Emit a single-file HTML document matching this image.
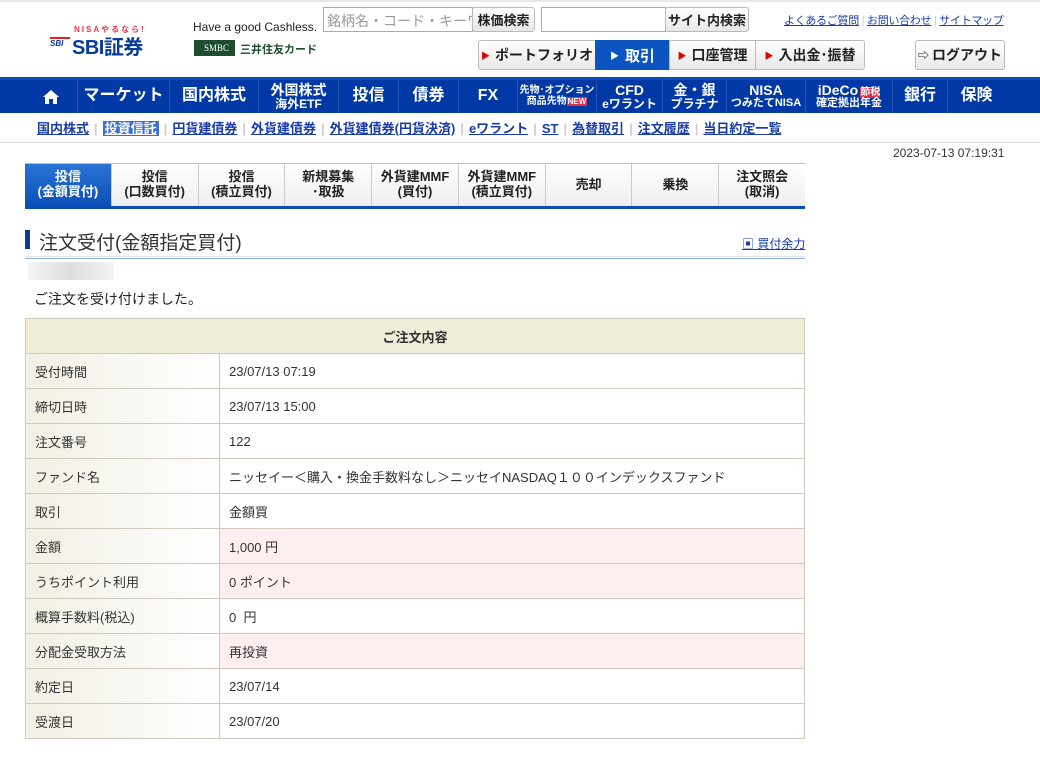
<!DOCTYPE html>
<html><head><meta charset="utf-8">
<style>
*{margin:0;padding:0;box-sizing:border-box}
body{width:1040px;height:761px;background:#fff;font-family:"Liberation Sans","Noto Sans CJK JP",sans-serif;color:#333;position:relative;overflow:hidden;font-size:13px}
.a{position:absolute}
a{color:#0b3a9e}
.topline{left:0;top:0;width:1040px;height:2px;background:#e8e8e8}
.inp{border:1px solid #aaa;background:#fff;height:25px}
.btn{border:1px solid #bbb;border-radius:3px;background:linear-gradient(#fff,#e8e8e8);font-weight:bold;font-size:13px;color:#222;display:flex;align-items:center;justify-content:center}
.toplinks{top:12px;left:784px;font-size:11px;white-space:nowrap;letter-spacing:-0.3px}
.toplinks a{text-decoration:underline;color:#1a3ca8}
.nav{left:0;top:77px;width:1040px;height:36px;background:#0039a6;border-top:3px solid #0a4cc0}
.ni{position:absolute;top:0;height:33px;color:#fff;font-weight:bold;display:flex;flex-direction:column;align-items:center;justify-content:center;border-right:1px solid #2652b3;line-height:1.05;text-align:center}
.ni.b{font-size:16px}
.ni.s{font-size:14px}
.ni small{font-size:12px}
.sub{top:118px;left:37px;font-size:13px;font-weight:bold;white-space:nowrap}
.sub a{text-decoration:underline;color:#1a3ca8;margin-right:5px}
.sub span.sep{color:#ccc;margin-right:5px}
.tabs{left:25px;top:163px;width:780px;height:46px;border-top:1px solid #bbb;border-bottom:3px solid #0a4cb5;display:flex}
.tab{flex:1;border-right:1px solid #ccc;background:linear-gradient(#fff,#eee);display:flex;align-items:center;justify-content:center;text-align:center;font-weight:bold;font-size:13px;line-height:1.15;color:#222}
.tab.on{background:linear-gradient(#2a74d6,#0b4fb6);color:#fff}
table{position:absolute;left:25px;top:318px;width:780px;border-collapse:collapse;font-size:13px}
td,th{border:1px solid #cfcabd;height:35px;padding:0 9px}
th{background:#efecd8;font-weight:bold;text-align:center;color:#333}
td.l{width:194px;background:linear-gradient(90deg,#f2efe4,#fff)}
tr.p td.v{background:#fdeef0}
</style></head><body>
<div class="a topline"></div>
<div class="a" style="left:74px;top:24px;font-size:8px;color:#e0364f;letter-spacing:2px;font-weight:bold">NISAやるなら!</div>
<div class="a" style="left:50px;top:37px;width:20px;height:12px;font-size:8px;font-weight:bold;font-style:italic;color:#0a3a9a;border-top:2px solid #d22">SBI</div>
<div class="a" style="left:72px;top:31px;font-size:20px;font-weight:bold;color:#0a3a9a;letter-spacing:-0.5px">SBI証券</div>
<div class="a" style="left:193px;top:20px;font-size:12px;color:#222">Have a good Cashless.</div>
<div class="a" style="left:194px;top:40px;width:41px;height:16px;background:#1d4d2e;color:#fff;font-size:9px;line-height:16px;padding-left:10px;font-family:'Liberation Serif',serif">SMBC</div>
<div class="a" style="left:240px;top:41px;font-size:11px;color:#1d4d2e;font-weight:bold">三井住友カード</div>
<div class="a inp" style="left:323px;top:7px;width:150px;color:#999;font-size:14px;padding:3px 3px;white-space:nowrap;overflow:hidden">銘柄名・コード・キーワ</div>
<div class="a btn" style="left:472px;top:7px;width:63px;height:25px">株価検索</div>
<div class="a inp" style="left:541px;top:7px;width:125px"></div>
<div class="a btn" style="left:665px;top:7px;width:84px;height:25px">サイト内検索</div>
<div class="a toplinks"><a>よくあるご質問</a> <span style="color:#ccc">|</span> <a>お問い合わせ</a> <span style="color:#ccc">|</span> <a>サイトマップ</a></div>
<div class="a btn" style="left:478px;top:40px;width:118px;height:30px;font-size:14px;border-radius:3px 0 0 3px"><span style="color:#d00;font-size:9px;margin-right:5px">▶</span>ポートフォリオ</div>
<div class="a" style="left:595px;top:40px;width:75px;height:30px;background:#0b54c2;color:#fff;font-weight:bold;font-size:15px;display:flex;align-items:center;justify-content:center"><span style="font-size:9px;margin-right:6px">▶</span>取引</div>
<div class="a btn" style="left:669px;top:40px;width:87px;height:30px;font-size:14px;border-radius:0"><span style="color:#d00;font-size:9px;margin-right:5px">▶</span>口座管理</div>
<div class="a btn" style="left:755px;top:40px;width:110px;height:30px;font-size:14px;border-radius:0 3px 3px 0"><span style="color:#d00;font-size:9px;margin-right:5px">▶</span>入出金･振替</div>
<div class="a btn" style="left:915px;top:40px;width:90px;height:30px;font-size:14px"><span style="font-size:11px;margin-right:3px">⇨</span>ログアウト</div>
<div class="a nav">
<div class="ni b" style="left:25px;width:53px"><svg width="16" height="14" viewBox="0 0 16 14"><path d="M8 0L0 7h2v7h4V9h4v5h4V7h2z" fill="#fff"/></svg></div>
<div class="ni b" style="left:78px;width:92px">マーケット</div>
<div class="ni b" style="left:170px;width:89px">国内株式</div>
<div class="ni s" style="left:259px;width:80px">外国株式<small>海外ETF</small></div>
<div class="ni b" style="left:339px;width:60px">投信</div>
<div class="ni b" style="left:399px;width:60px">債券</div>
<div class="ni b" style="left:459px;width:59px">FX</div>
<div class="ni" style="left:518px;width:79px;font-size:10px">先物･オプション<span>商品先物<span style="background:#e0304a;font-size:8px;padding:0 1px">NEW</span></span></div>
<div class="ni s" style="left:597px;width:66px">CFD<small>eワラント</small></div>
<div class="ni s" style="left:663px;width:64px">金・銀<small>プラチナ</small></div>
<div class="ni s" style="left:727px;width:79px">NISA<small style="font-size:11px">つみたてNISA</small></div>
<div class="ni s" style="left:806px;width:87px"><span>iDeCo<span style="background:#e0304a;font-size:10px;margin-left:2px">節税</span></span><small style="font-size:11px">確定拠出年金</small></div>
<div class="ni b" style="left:893px;width:55px">銀行</div>
<div class="ni b" style="left:948px;width:57px;border:none">保険</div>
</div>
<div class="a sub"><a>国内株式</a><span class="sep">|</span><a style="background:#3c6fd0;color:#fff;padding:0 2px">投資信託</a><span class="sep">|</span><a>円貨建債券</a><span class="sep">|</span><a>外貨建債券</a><span class="sep">|</span><a>外貨建債券(円貨決済)</a><span class="sep">|</span><a>eワラント</a><span class="sep">|</span><a>ST</a><span class="sep">|</span><a>為替取引</a><span class="sep">|</span><a>注文履歴</a><span class="sep">|</span><a>当日約定一覧</a></div>
<div class="a" style="left:0;top:142px;width:1040px;height:1px;background:#ddd"></div>
<div class="a" style="left:893px;top:146px;font-size:12px;color:#333">2023-07-13 07:19:31</div>
<div class="a tabs">
<div class="tab on">投信<br>(金額買付)</div><div class="tab">投信<br>(口数買付)</div><div class="tab">投信<br>(積立買付)</div><div class="tab">新規募集<br>･取扱</div><div class="tab">外貨建MMF<br>(買付)</div><div class="tab">外貨建MMF<br>(積立買付)</div><div class="tab">売却</div><div class="tab">乗換</div><div class="tab" style="border-right:none">注文照会<br>(取消)</div>
</div>
<div class="a" style="left:25px;top:230px;width:5px;height:19px;background:#0a3a9a"></div>
<div class="a" style="left:39px;top:228px;font-size:19px;color:#333">注文受付(金額指定買付)</div>
<div class="a" style="left:742px;top:235px;font-size:12px;text-decoration:underline;color:#1a3ca8">▣ 買付余力</div>
<div class="a" style="left:25px;top:256px;width:780px;height:1px;background:#dde6f2"></div>
<div class="a" style="left:25px;top:258px;width:780px;height:1px;background:#8fb0dd"></div>
<div class="a" style="left:28px;top:262px;width:86px;height:18px;background:linear-gradient(90deg,#f4f4f4,#ddd 50%,#f4f4f4)"></div>
<div class="a" style="left:34px;top:289px;font-size:14px;color:#222">ご注文を受け付けました。</div>
<table>
<tr><th colspan="2">ご注文内容</th></tr>
<tr><td class="l">受付時間</td><td class="v">23/07/13 07:19</td></tr>
<tr><td class="l">締切日時</td><td class="v">23/07/13 15:00</td></tr>
<tr><td class="l">注文番号</td><td class="v">122</td></tr>
<tr><td class="l">ファンド名</td><td class="v">ニッセイー＜購入・換金手数料なし＞ニッセイNASDAQ１００インデックスファンド</td></tr>
<tr><td class="l">取引</td><td class="v">金額買</td></tr>
<tr class="p"><td class="l">金額</td><td class="v">1,000 円</td></tr>
<tr class="p"><td class="l">うちポイント利用</td><td class="v">0 ポイント</td></tr>
<tr><td class="l">概算手数料(税込)</td><td class="v">0&nbsp; 円</td></tr>
<tr class="p"><td class="l">分配金受取方法</td><td class="v">再投資</td></tr>
<tr><td class="l">約定日</td><td class="v">23/07/14</td></tr>
<tr><td class="l">受渡日</td><td class="v">23/07/20</td></tr>
</table>
</body></html>
